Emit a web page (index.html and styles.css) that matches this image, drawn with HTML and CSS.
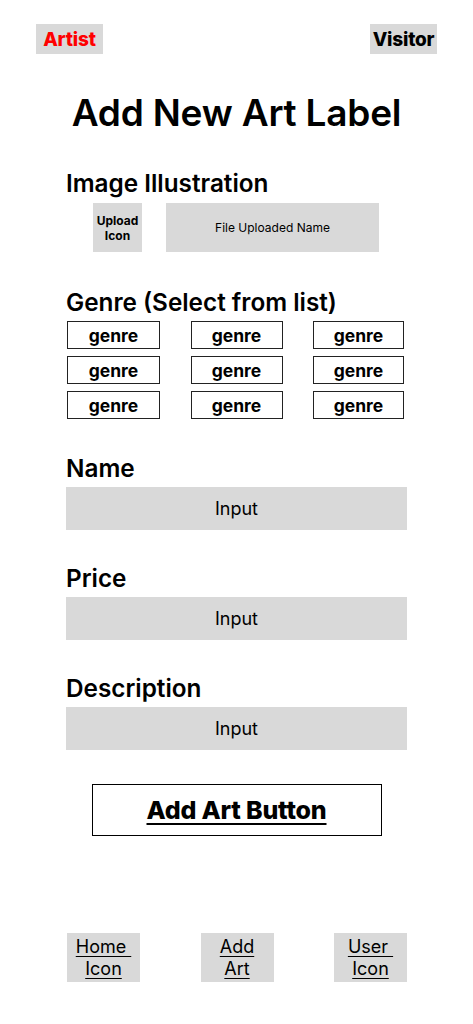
FILE: index.html
```html
<!DOCTYPE html>
<html lang="en">
<head>
<meta charset="utf-8">
<title>Add New Art Label</title>
<link rel="stylesheet" href="styles.css">
</head>
<body>
<div class="page">
  <header class="topbar">
    <div class="role role-artist">Artist</div>
    <div class="role">Visitor</div>
  </header>

  <h1 class="title">Add New Art Label</h1>

  <main class="form">
    <section class="field field-image">
      <h2 class="label">Image Illustration</h2>
      <div class="upload-row">
        <div class="upload-icon">Upload<br>Icon</div>
        <div class="file-name">File Uploaded Name</div>
      </div>
    </section>

    <section class="field field-genre">
      <h2 class="label">Genre (Select from list)</h2>
      <div class="genre-grid">
        <div class="genre">genre</div>
        <div class="genre">genre</div>
        <div class="genre">genre</div>
        <div class="genre">genre</div>
        <div class="genre">genre</div>
        <div class="genre">genre</div>
        <div class="genre">genre</div>
        <div class="genre">genre</div>
        <div class="genre">genre</div>
      </div>
    </section>

    <section class="field field-text">
      <h2 class="label">Name</h2>
      <div class="input">Input</div>
    </section>

    <section class="field field-text">
      <h2 class="label">Price</h2>
      <div class="input">Input</div>
    </section>

    <section class="field field-text">
      <h2 class="label">Description</h2>
      <div class="input">Input</div>
    </section>

    <div class="submit-wrap">
      <div class="submit">Add Art Button</div>
    </div>
  </main>

  <nav class="bottom-nav">
    <div class="nav-item">Home&nbsp;<br>Icon</div>
    <div class="nav-item">Add<br>Art</div>
    <div class="nav-item">User&nbsp;<br>Icon</div>
  </nav>
</div>
</body>
</html>
```

FILE: styles.css
```css
* { box-sizing: border-box; }

html, body {
  margin: 0;
  padding: 0;
  background: #ffffff;
}

body {
  font-family: Inter, "Noto Sans", "Liberation Sans", sans-serif;
  color: #000;
}

.page {
  width: 473px;
  height: 1024px;
  display: flex;
  flex-direction: column;
}

.topbar {
  display: flex;
  justify-content: space-between;
  padding: 24px 36px 0 36px;
}

.role {
  width: 67px;
  height: 30px;
  background: #d9d9d9;
  display: flex;
  align-items: center;
  justify-content: center;
  font-size: 19px;
  font-weight: 800;
  letter-spacing: -0.2px;
}

.role-artist { color: #ff0000; }

.title {
  margin: 37px 0 0 0;
  text-align: center;
  font-size: 37px;
  font-weight: 600;
  line-height: 44px;
  letter-spacing: -0.2px;
}

.form {
  padding: 0 66px;
  display: flex;
  flex-direction: column;
}

.field { display: flex; flex-direction: column; }

.label {
  margin: 0;
  font-size: 24.3px;
  font-weight: 600;
  line-height: 30px;
}

.field-image { margin-top: 33px; }

.upload-row {
  display: flex;
  gap: 24px;
  padding-left: 27px;
  margin-top: 5px;
}

.upload-icon {
  width: 49px;
  height: 49px;
  background: #d9d9d9;
  display: flex;
  align-items: center;
  justify-content: center;
  text-align: center;
  font-size: 12px;
  font-weight: 700;
  line-height: 15px;
}

.file-name {
  width: 213px;
  height: 49px;
  background: #d9d9d9;
  display: flex;
  align-items: center;
  justify-content: center;
  font-size: 12px;
}

.field-genre { margin-top: 35px; }

.genre-grid {
  display: grid;
  grid-template-columns: 93px 92px 91px;
  justify-content: space-between;
  row-gap: 7px;
  margin-top: 4px;
  padding: 0 3px 0 1px;
}

.genre {
  height: 28px;
  border: 1px solid #222;
  display: flex;
  align-items: center;
  justify-content: center;
  font-size: 17.5px;
  font-weight: 700;
}

.field-genre + .field-text { margin-top: 34px; }
.field-text + .field-text { margin-top: 33px; }

.input {
  margin-top: 4px;
  height: 43px;
  background: #d9d9d9;
  display: flex;
  align-items: center;
  justify-content: center;
  font-size: 18px;
}

.submit-wrap {
  display: flex;
  justify-content: center;
  margin-top: 34px;
}

.submit {
  width: 290px;
  height: 52px;
  border: 1px solid #000;
  display: flex;
  align-items: center;
  justify-content: center;
  font-size: 25px;
  font-weight: 800;
  text-decoration: underline;
  text-decoration-thickness: 2px;
  text-underline-offset: 4px;
  letter-spacing: -0.2px;
}

.bottom-nav {
  margin-top: auto;
  margin-bottom: 42px;
  display: flex;
  justify-content: space-between;
  padding: 0 66px 0 67px;
}

.nav-item {
  width: 73px;
  height: 49px;
  background: #d9d9d9;
  display: flex;
  align-items: center;
  justify-content: center;
  text-align: center;
  font-size: 18px;
  line-height: 22px;
  text-decoration: underline;
  text-underline-offset: 3px;
}
```
